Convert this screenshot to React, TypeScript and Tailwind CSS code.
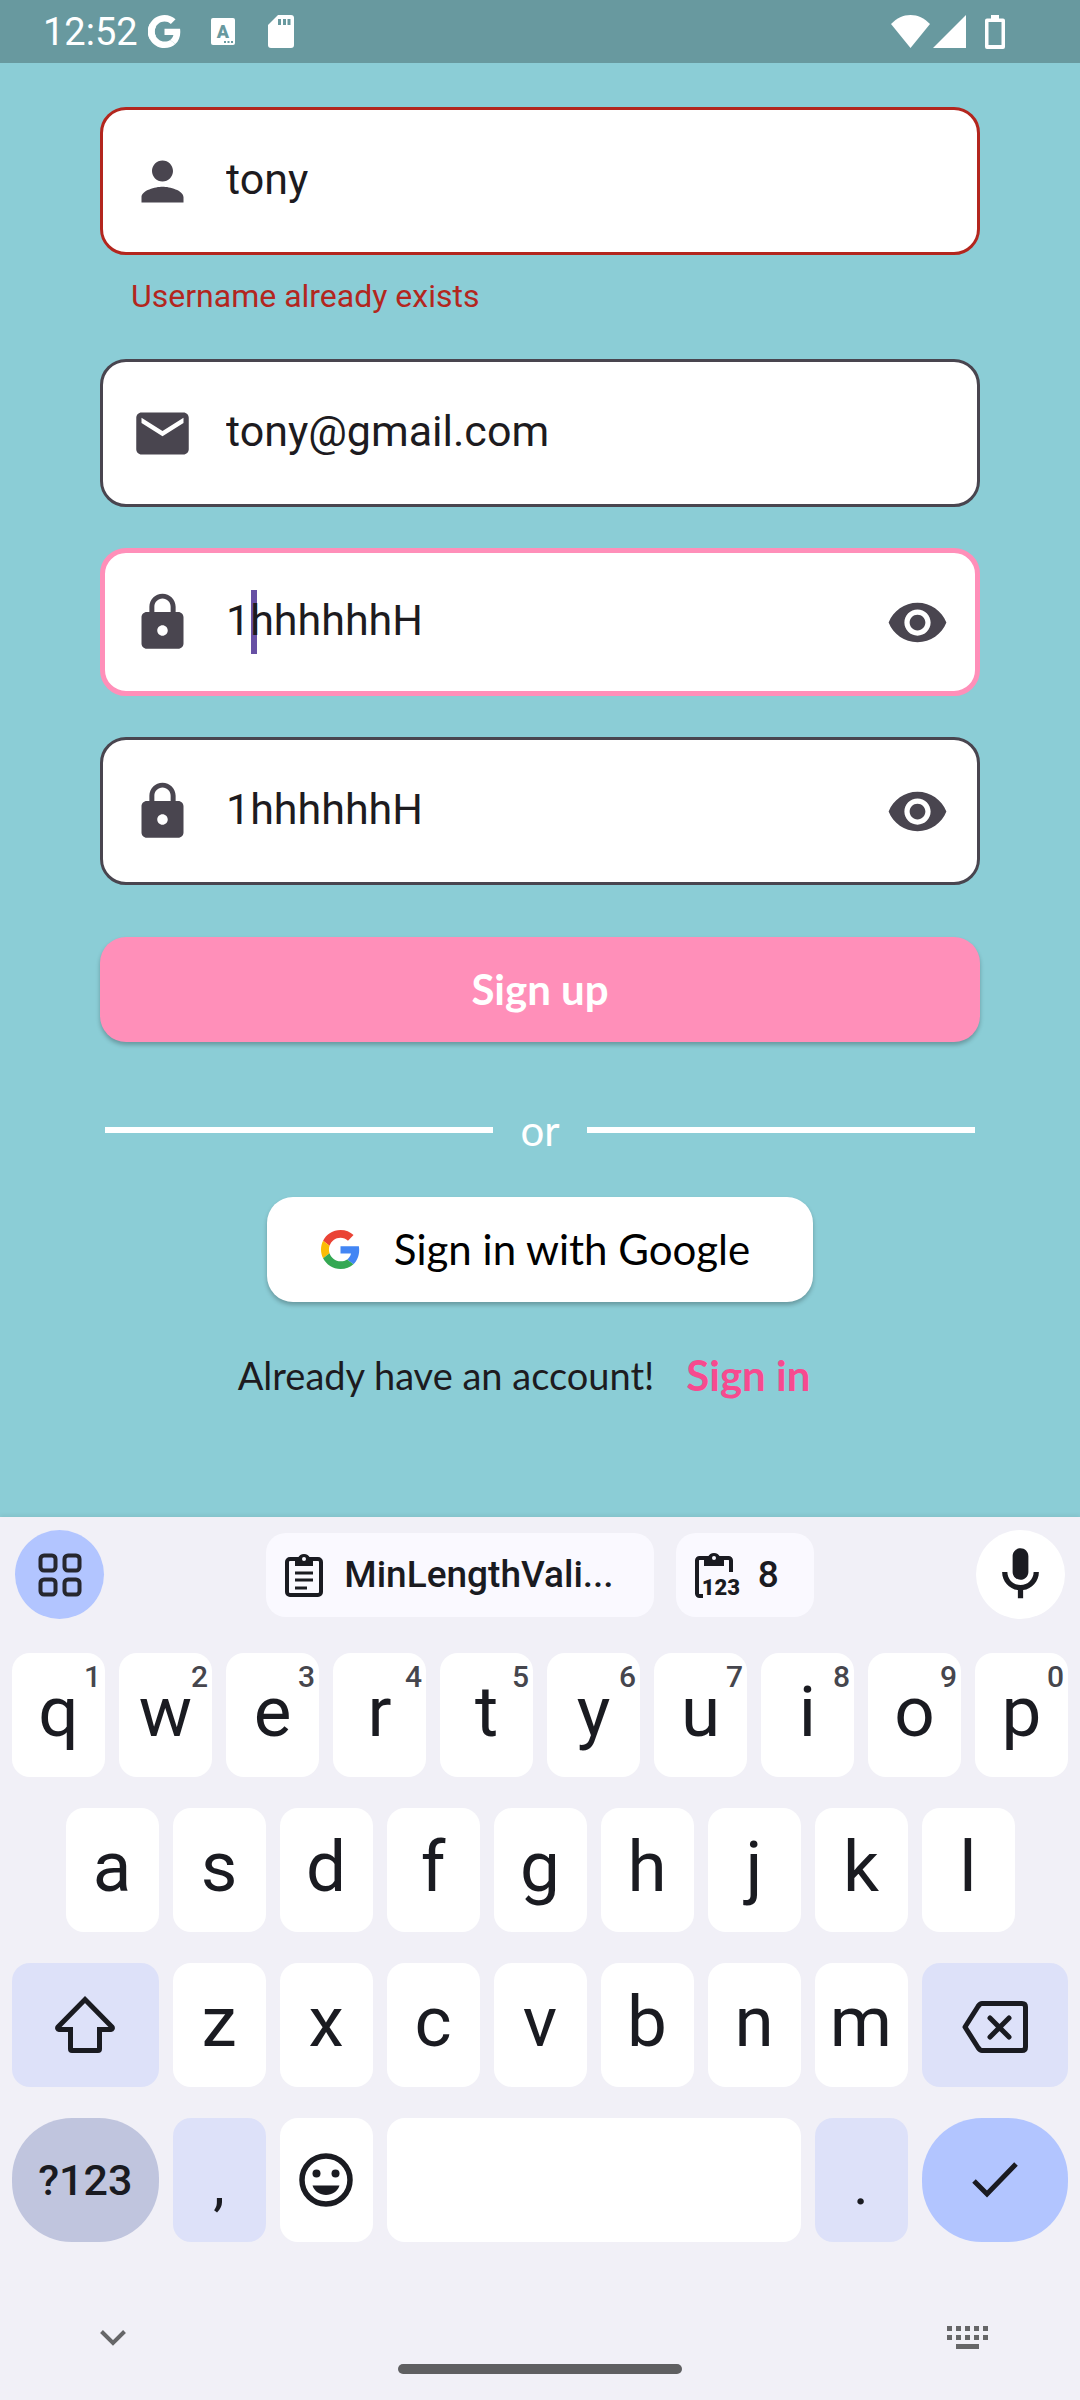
import { useState, type ReactNode } from "react";

function GoogleMark({ className, mono = false }: { className: string; mono?: boolean }) {
  return (
    <svg viewBox="0 0 48 48" className={className} aria-hidden="true">
      <path fill={mono ? "currentColor" : "#EA4335"} d="M24 9.5c3.54 0 6.71 1.22 9.21 3.6l6.85-6.85C35.9 2.38 30.47 0 24 0 14.62 0 6.51 5.38 2.56 13.22l7.98 6.19C12.43 13.72 17.74 9.5 24 9.5z" />
      <path fill={mono ? "currentColor" : "#4285F4"} d="M46.98 24.55c0-1.57-.15-3.09-.38-4.55H24v9.02h12.94c-.58 2.96-2.26 5.48-4.78 7.18l7.73 6c4.51-4.18 7.09-10.36 7.09-17.65z" />
      <path fill={mono ? "currentColor" : "#FBBC05"} d="M10.53 28.59c-.48-1.45-.76-2.99-.76-4.59s.27-3.14.76-4.59l-7.98-6.19C.92 16.46 0 20.12 0 24c0 3.88.92 7.54 2.56 10.78l7.97-6.19z" />
      <path fill={mono ? "currentColor" : "#34A853"} d="M24 48c6.48 0 11.93-2.13 15.89-5.81l-7.73-6c-2.15 1.45-4.92 2.3-8.16 2.3-6.26 0-11.57-4.22-13.47-9.91l-7.98 6.19C6.51 42.62 14.62 48 24 48z" />
      {mono && <path fill="none" stroke="currentColor" strokeWidth="10" d="M7 15a19 19 0 0 0 0 18" />}
    </svg>
  );
}

function StatusBar() {
  return (
    <header className="flex h-[63px] items-center justify-between bg-[#68999f] pl-[43px] pr-[75px] text-white">
      <div className="flex items-center">
        <span className="text-[38px] leading-[44px]">12:52</span>
        <GoogleMark mono className="ml-[10px] size-[33px]" />
        <svg viewBox="0 0 24 27" className="ml-[30px] h-[27px] w-[24px]" aria-hidden="true">
          <rect width="24" height="27" rx="2" fill="currentColor" />
          <text x="12" y="20" textAnchor="middle" fontSize="18" fontWeight="900" fill="#68999f" fontFamily="Roboto, sans-serif">A</text>
          <path fill="#68999f" d="M13 23h2v2h-2zM16.500 23h2v2h-2zM20 23h2v2h-2z" />
        </svg>
        <svg viewBox="0 0 26 33" className="ml-[33px] h-[33px] w-[26px]" aria-hidden="true">
          <path fill="currentColor" d="M10 0h13a3 3 0 0 1 3 3v27a3 3 0 0 1-3 3H3a3 3 0 0 1-3-3V10z" />
          <path fill="#68999f" d="M10 4h3v6h-3zM15 4h3v6h-3zM19.500 4h3v6h-3z" />
        </svg>
      </div>
      <div className="flex items-center">
        <svg viewBox="0 0 39 33" className="h-[33px] w-[39px]" aria-hidden="true">
          <path fill="currentColor" d="M0 9C6 3 12 0 19.500 0S33 3 39 9L19.500 33z" />
        </svg>
        <svg viewBox="0 0 33 33" className="ml-[3px] size-[33px]" aria-hidden="true">
          <path fill="currentColor" d="M33 0v33H0z" />
        </svg>
        <svg viewBox="0 0 20 34" className="ml-[19px] h-[34px] w-[20px]" aria-hidden="true">
          <path fill="currentColor" fillRule="evenodd" d="M6 0h8v3.500h4a2 2 0 0 1 2 2V32a2 2 0 0 1-2 2H2a2 2 0 0 1-2-2V5.500a2 2 0 0 1 2-2h4zM3.500 7v23h13V7z" />
        </svg>
      </div>
    </header>
  );
}

const PERSON = "M12 12c2.210 0 4-1.790 4-4s-1.790-4-4-4-4 1.790-4 4 1.790 4 4 4zm0 2c-2.670 0-8 1.340-8 4v2h16v-2c0-2.660-5.330-4-8-4z";
const MAIL = "M20 4H4c-1.100 0-1.990.9-1.990 2L2 18c0 1.100.9 2 2 2h16c1.100 0 2-.9 2-2V6c0-1.100-.9-2-2-2zm0 4l-8 5-8-5V6l8 5 8-5v2z";
const LOCK = "M18 8h-1V6c0-2.760-2.240-5-5-5S7 3.240 7 6v2H6c-1.100 0-2 .9-2 2v10c0 1.100.9 2 2 2h12c1.100 0 2-.9 2-2V10c0-1.100-.9-2-2-2zm-6 9c-1.100 0-2-.9-2-2s.9-2 2-2 2 .9 2 2-.9 2-2 2zm3.100-9H8.900V6c0-1.710 1.390-3.100 3.100-3.100 1.710 0 3.100 1.390 3.100 3.100v2z";
const EYE = "M12 4.500C7 4.500 2.730 7.610 1 12c1.730 4.390 6 7.500 11 7.500s9.270-3.110 11-7.500c-1.730-4.390-6-7.500-11-7.500zM12 17c-2.760 0-5-2.240-5-5s2.240-5 5-5 5 2.240 5 5-2.240 5-5 5zm0-8c-1.660 0-3 1.340-3 3s1.340 3 3 3 3-1.340 3-3-1.340-3-3-3z";

function MaterialIcon({ d, label }: { d: string; label?: string }) {
  return (
    <svg viewBox="0 0 24 24" className="size-[63px] shrink-0" fill="currentColor" role={label ? "img" : undefined} aria-label={label} aria-hidden={label ? undefined : true}>
      <path d={d} />
    </svg>
  );
}

type FieldProps = {
  id: string;
  label: string;
  icon: string;
  initial: string;
  border?: string;
  caret?: boolean;
  secret?: boolean;
};

function Field({ id, label, icon, initial, border = "border-[3px] border-[#49454f] px-[28px]", caret, secret }: FieldProps) {
  const [value, setValue] = useState(initial);
  const [shown, setShown] = useState(true);
  return (
    <div className={`flex h-[148px] items-center rounded-[26px] bg-white text-[#49454f] ${border}`}>
      <label htmlFor={id}>
        <MaterialIcon d={icon} label={label} />
      </label>
      <div className="relative ml-[32px] min-w-0 flex-1">
        {caret && <span className="absolute inset-y-0 left-[25px] w-[6px] bg-[#6750a4]" />}
        <input
          id={id}
          type={shown ? "text" : "password"}
          value={value}
          onChange={(e) => setValue(e.target.value)}
          className="relative block h-[64px] w-full bg-transparent pb-[3px] text-[43px] text-[#1d1b20] outline-none"
        />
      </div>
      {secret && (
        <button type="button" aria-label={`Toggle ${label.toLowerCase()} visibility`} onClick={() => setShown(!shown)}>
          <MaterialIcon d={EYE} />
        </button>
      )}
    </div>
  );
}

const raised = "shadow-[0_3px_4px_rgba(0,0,0,0.25)]";

function SignUpForm() {
  return (
    <main className="flex-1 px-[100px] pt-[44px]">
      <form onSubmit={(e) => e.preventDefault()}>
        <div className="flex flex-col gap-[41px]">
          <div>
            <Field id="username" label="Username" icon={PERSON} initial="tony" border="border-[3px] border-[#b3261e] px-[28px]" />
            <p className="ml-[31px] mt-[20px] text-[32px] leading-[43px] text-[#b3261e]">Username already exists</p>
          </div>
          <Field id="email" label="Email" icon={MAIL} initial="tony@gmail.com" />
          <Field id="password" label="Password" icon={LOCK} initial="1hhhhhhH" caret secret border="border-[5px] border-[#ff8fb9] px-[26px]" />
          <Field id="confirm" label="Confirm password" icon={LOCK} initial="1hhhhhhH" secret />
        </div>
        <button type="submit" className={`mt-[52px] h-[105px] w-full rounded-[26px] bg-[#ff8fb9] font-[Lato,sans-serif] text-[42px] font-bold text-white ${raised}`}>
          Sign up
        </button>
      </form>
      <div className="mt-[63px] flex h-[50px] items-center gap-[27px] px-[5px] font-[Lato,sans-serif] text-[42px] leading-[50px] text-white">
        <span className="h-[6px] flex-1 bg-white" />
        <span>or</span>
        <span className="h-[6px] flex-1 bg-white" />
      </div>
      <button type="button" className={`mx-auto mt-[42px] flex h-[105px] items-center gap-[34px] rounded-[26px] bg-white pl-[54px] pr-[63px] font-[Lato,sans-serif] text-[42px] text-black ${raised}`}>
        <GoogleMark className="size-[39px]" />
        Sign in with Google
      </button>
      <div className="mt-[46px] flex items-center justify-center font-[Lato,sans-serif]">
        <span className="text-[38px] leading-[54px] text-[#1d1b20]">Already have an account!</span>
        <a href="#signin" className="px-[32px] text-[42px] font-bold leading-[54px] text-[#f74a8f]">Sign in</a>
      </div>
    </main>
  );
}

const letterKey = "relative h-[124px] rounded-[18px] bg-white pb-[8px] text-[71px] leading-none";

function LetterKey({ letter, hint, start = "" }: { letter: string; hint?: string; start?: string }) {
  return (
    <button type="button" className={`col-span-2 ${letterKey} ${start}`}>
      {letter}
      {hint && <span className="absolute right-[4px] top-[7px] text-[30px] font-medium leading-[34px] text-[#46464d]">{hint}</span>}
    </button>
  );
}

function ActionKey({ label, className, children }: { label: string; className: string; children?: ReactNode }) {
  return (
    <button type="button" aria-label={label} className={`flex h-[124px] items-center justify-center ${className}`}>
      {children}
    </button>
  );
}

function SuggestionStrip() {
  return (
    <div className="flex items-center justify-between px-[15px]">
      <button type="button" aria-label="Keyboard tools" className="flex size-[89px] items-center justify-center rounded-full bg-[#b2c5ff]">
        <svg viewBox="0 0 44 44" className="size-[44px]" fill="none" stroke="#26272f" strokeWidth="4" aria-hidden="true">
          <rect x="2.500" y="2.500" width="15" height="15" rx="3.500" />
          <rect x="26.500" y="2.500" width="15" height="15" rx="3.500" />
          <rect x="2.500" y="26.500" width="15" height="15" rx="3.500" />
          <rect x="26.500" y="26.500" width="15" height="15" rx="3.500" />
        </svg>
      </button>
      <div className="flex gap-[22px] text-[37px] font-medium">
        <button type="button" className="flex h-[84px] items-center gap-[20px] rounded-[20px] bg-[#faf9ff] pl-[18px] pr-[40px]">
          <svg viewBox="0 0 40 46" className="h-[46px] w-[40px]" fill="none" stroke="currentColor" strokeWidth="4" aria-hidden="true">
            <rect x="3" y="7" width="34" height="36" rx="3" />
            <path fill="currentColor" stroke="none" d="M11 6h3a6.500 6.500 0 0 1 12 0h3v8H11z" />
            <circle cx="20" cy="7" r="2" fill="#faf9ff" stroke="none" />
            <path strokeWidth="3" d="M11 21h18M11 28h18M11 36h12" />
          </svg>
          MinLengthVali...
        </button>
        <button type="button" className="flex h-[84px] items-center gap-[18px] rounded-[20px] bg-[#faf9ff] pl-[18px] pr-[35px]">
          <svg viewBox="0 0 46 48" className="h-[48px] w-[46px]" fill="none" stroke="currentColor" strokeWidth="4" aria-hidden="true">
            <path d="M9 45H5.500a2.500 2.500 0 0 1-2.500-2.500V9.500A2.500 2.500 0 0 1 5.500 7h29A2.500 2.500 0 0 1 37 9.500V21" />
            <path fill="currentColor" stroke="none" d="M10 6h4a6.500 6.500 0 0 1 12 0h4v9H10z" />
            <circle cx="20" cy="7" r="2" fill="#faf9ff" stroke="none" />
            <text x="27" y="44" textAnchor="middle" fontSize="22" fontWeight="900" fill="currentColor" stroke="none" fontFamily="Roboto, sans-serif">123</text>
          </svg>
          8
        </button>
      </div>
      <button type="button" aria-label="Voice input" className="flex size-[89px] items-center justify-center rounded-full bg-white">
        <MaterialIcon d="M12 14c1.660 0 3-1.340 3-3V5c0-1.660-1.340-3-3-3S9 3.340 9 5v6c0 1.660 1.340 3 3 3zm5-3c0 2.760-2.240 5-5 5s-5-2.240-5-5H5c0 3.530 2.610 6.430 6 6.920V21h2v-3.080c3.390-.49 6-3.390 6-6.920h-2z" />
      </button>
    </div>
  );
}

function Keyboard() {
  return (
    <section aria-label="Keyboard" className="bg-[#f1f0f7] pb-[26px] pt-[13px] text-[#1a1b21] shadow-[0_-2px_4px_rgba(0,0,0,0.06)]">
      <SuggestionStrip />
      <div className="mt-[34px] grid grid-cols-20 gap-x-[14px] gap-y-[31px] px-[12px]">
        {[..."qwertyuiop"].map((c, i) => (
          <LetterKey key={c} letter={c} hint={String((i + 1) % 10)} />
        ))}
        {[..."asdfghjkl"].map((c, i) => (
          <LetterKey key={c} letter={c} start={i === 0 ? "col-start-2" : ""} />
        ))}
        <ActionKey label="Shift" className="col-span-3 col-start-1 rounded-[18px] bg-[#dde1f9]">
          <svg viewBox="0 0 60 60" className="size-[60px]" fill="none" stroke="currentColor" strokeWidth="5" aria-hidden="true">
            <path d="M30 4.500L57 32a1.500 1.500 0 0 1-1 2.500H44.500V54a1.500 1.500 0 0 1-1.500 1.500H17a1.500 1.500 0 0 1-1.500-1.500V34.500H4A1.500 1.500 0 0 1 3 32z" />
          </svg>
        </ActionKey>
        {[..."zxcvbnm"].map((c) => (
          <LetterKey key={c} letter={c} />
        ))}
        <ActionKey label="Backspace" className="col-span-3 rounded-[18px] bg-[#dde1f9]">
          <svg viewBox="0 0 68 54" className="mt-[4px] h-[54px] w-[68px]" fill="none" stroke="currentColor" strokeWidth="5" strokeLinejoin="round" aria-hidden="true">
            <path d="M4 27L17 6.500Q19 3.500 21 3.500H61Q64.500 3.500 64.500 7V47Q64.500 50.500 61 50.500H21Q19 50.500 17 47.500z" />
            <path strokeLinecap="round" d="M29 18l19 19M48 18L29 37" />
          </svg>
        </ActionKey>
        <button type="button" className="col-span-3 h-[124px] rounded-[60px] bg-[#c0c5de] text-[43px] font-medium">
          ?123
        </button>
        <button type="button" className="col-span-2 h-[124px] rounded-[18px] bg-[#dde1f9] pt-[8px] text-[58px]">
          ,
        </button>
        <ActionKey label="Emoji" className="col-span-2 rounded-[18px] bg-white">
          <svg viewBox="0 0 54 54" className="size-[54px]" fill="currentColor" aria-hidden="true">
            <circle cx="27" cy="27" r="24" fill="none" stroke="currentColor" strokeWidth="5.500" />
            <circle cx="17.500" cy="20.500" r="4" />
            <circle cx="36.500" cy="20.500" r="4" />
            <path d="M13.500 32.500h27c-2 6-7.500 9.500-13.500 9.500s-11.500-3.500-13.500-9.500z" />
          </svg>
        </ActionKey>
        <ActionKey label="Space" className="col-span-8 rounded-[18px] bg-white" />
        <button type="button" className="col-span-2 h-[124px] rounded-[18px] bg-[#dde1f9] pt-[8px] text-[58px]">
          .
        </button>
        <ActionKey label="Done" className="col-span-3 rounded-[60px] bg-[#b2c5ff]">
          <svg viewBox="0 0 46 36" className="h-[36px] w-[46px]" fill="none" stroke="currentColor" strokeWidth="5" aria-hidden="true">
            <path d="M2 19l13 13L44 2" />
          </svg>
        </ActionKey>
      </div>
      <div className="mt-[80px] flex h-[31px] items-center justify-between pl-[100px] pr-[92px] text-[#666668]">
        <button type="button" aria-label="Hide keyboard">
          <svg viewBox="0 0 26 16" className="h-[16px] w-[26px]" fill="none" stroke="currentColor" strokeWidth="4" aria-hidden="true">
            <path d="M1.500 1.500L13 13 24.500 1.500" />
          </svg>
        </button>
        <button type="button" aria-label="Switch keyboard">
          <svg viewBox="0 0 41 23" className="h-[23px] w-[41px]" fill="currentColor" aria-hidden="true">
            <path d="M0 0h5v5H0zM9 0h5v5H9zM18 0h5v5h-5zM27 0h5v5h-5zM36 0h5v5h-5zM0 9h5v5H0zM9 9h5v5H9zM18 9h5v5h-5zM27 9h5v5h-5zM36 9h5v5h-5zM9 18h23v5H9z" />
          </svg>
        </button>
      </div>
      <div className="mx-auto mt-[11px] h-[10px] w-[284px] rounded-full bg-[#5f5f61]" />
    </section>
  );
}

export default function App() {
  return (
    <div className="flex min-h-screen flex-col bg-[#8bcdd6] font-[Roboto,sans-serif]">
      <StatusBar />
      <SignUpForm />
      <Keyboard />
    </div>
  );
}
